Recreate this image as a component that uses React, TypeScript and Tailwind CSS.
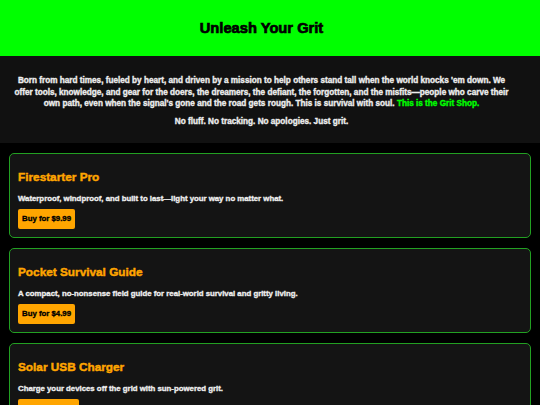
const products = [
  {
    name: "Firestarter Pro",
    blurb: "Waterproof, windproof, and built to last—light your way no matter what.",
    price: "$9.99",
  },
  {
    name: "Pocket Survival Guide",
    blurb: "A compact, no-nonsense field guide for real-world survival and gritty living.",
    price: "$4.99",
  },
  {
    name: "Solar USB Charger",
    blurb: "Charge your devices off the grid with sun-powered grit.",
    price: "$14.99",
  },
]

export default function App() {
  return (
    <div className="min-h-screen bg-black font-['Liberation_Sans',Arial,sans-serif] font-bold text-white [-webkit-text-stroke:0.35px_currentColor]">
      <header className="flex h-[56px] items-center justify-center bg-[#00ff00] pr-[17px]">
        <h1 className="text-[14.7px] font-bold text-black [-webkit-text-stroke:0.7px_currentColor]">Unleash Your Grit</h1>
      </header>

      <section className="bg-[#111111] pl-[8px] pr-[25px] pt-[19px] pb-[15px] text-center text-[8.2px] leading-[11.7px] text-[#eeeeee]">
        <p>
          Born from hard times, fueled by heart, and driven by a mission to help others stand tall when the world
          knocks 'em down. We offer tools, knowledge, and gear for the doers, the dreamers, the defiant, the
          forgotten, and the misfits—people who carve their own path, even when the signal's gone and the road gets
          rough. This is survival with soul. <span className="text-[#00ff00]">This is the Grit Shop.</span>
        </p>
        <p className="mt-[6px]">No fluff. No tracking. No apologies. Just grit.</p>
      </section>

      <main className="flex flex-col gap-[10px] px-[9px] pt-[10px] pb-[10px]">
        {products.map((p) => (
          <div key={p.name} className="rounded-[5px] border border-[#22a022] bg-[#141414] px-[8px] pt-[15px] pb-[8px]">
            <h2 className="text-[11.8px] leading-[16px] text-[#ffa500] [-webkit-text-stroke:0.45px_currentColor]">{p.name}</h2>
            <p className="mt-[9px] text-[7.8px] leading-[10px] text-[#eeeeee]">{p.blurb}</p>
            <button className="mt-[4px] rounded-[2px] bg-[#ffa500] px-[4px] py-[6px] text-[7.8px] leading-[8px] font-bold text-black">
              Buy for {p.price}
            </button>
          </div>
        ))}
      </main>
    </div>
  )
}
